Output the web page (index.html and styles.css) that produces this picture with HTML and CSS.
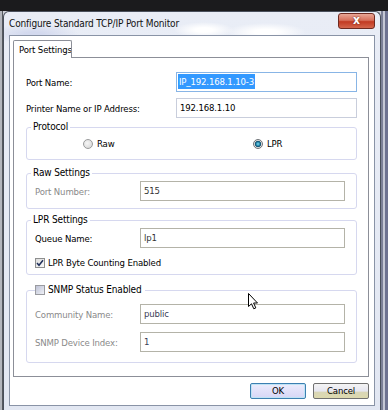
FILE: index.html
```html
<!DOCTYPE html>
<html lang="en">
<head>
    <meta charset="UTF-8" />
    <meta name="viewport" content="width=device-width, initial-scale=1.0" />
    <title>Configure Standard TCP/IP Port Monitor</title>
    <link rel="stylesheet" href="styles.css">
</head>
<body>
    <div class="taskbar"></div>
    <div class="desktop">
        <div class="behind-left"></div>
        <div class="window">
            <div class="title-bar">
                <span class="title">Configure Standard TCP/IP Port Monitor</span>
                <div class="close-button">x</div>
            </div>
            <div class="client">
                <div class="tabs">
                    <div class="tab">Port Settings</div>
                </div>
                <div class="tab-page">
                    <div class="field-row">
                        <span class="label">Port Name:</span>
                        <div class="textbox focused"><span class="selected">IP_192.168.1.10-3</span></div>
                    </div>
                    <div class="field-row second">
                        <span class="label">Printer Name or IP Address:</span>
                        <div class="textbox light">192.168.1.10</div>
                    </div>

                    <fieldset class="group protocol">
                        <legend>Protocol</legend>
                        <div class="radio-row">
                            <div class="radio-item first">
                                <span class="radio"></span>
                                <span>Raw</span>
                            </div>
                            <div class="radio-item">
                                <span class="radio checked"></span>
                                <span>LPR</span>
                            </div>
                        </div>
                    </fieldset>

                    <fieldset class="group raw">
                        <legend>Raw Settings</legend>
                        <div class="field-row">
                            <span class="label small disabled">Port Number:</span>
                            <div class="textbox grey">515</div>
                        </div>
                    </fieldset>

                    <fieldset class="group lpr">
                        <legend>LPR Settings</legend>
                        <div class="field-row">
                            <span class="label small">Queue Name:</span>
                            <div class="textbox grey">lp1</div>
                        </div>
                        <div class="check-row">
                            <span class="checkbox">
                                <svg width="8" height="8" viewBox="0 0 8 8"><path d="M1 4 L3 6.3 L7 1.2" fill="none" stroke="#1f2f5a" stroke-width="1.5"/></svg>
                            </span>
                            <span>LPR Byte Counting Enabled</span>
                        </div>
                    </fieldset>

                    <fieldset class="group snmp">
                        <legend class="check-legend">
                            <span class="checkbox empty"></span>
                            <span>SNMP Status Enabled</span>
                        </legend>
                        <div class="field-row">
                            <span class="label small disabled">Community Name:</span>
                            <div class="textbox grey value-dim">public</div>
                        </div>
                        <div class="field-row gap">
                            <span class="label small disabled">SNMP Device Index:</span>
                            <div class="textbox grey value-dim">1</div>
                        </div>
                    </fieldset>
                </div>
                <div class="buttons">
                    <div class="button ok">OK</div>
                    <div class="button cancel">Cancel</div>
                </div>
            </div>
        </div>
        <div class="behind-right"></div>
    </div>

    <!-- mouse pointer -->
    <svg class="pointer" width="11" height="17" viewBox="0 0 11 17">
        <path d="M0.5 0.5 L0.5 13.5 L3.5 10.8 L5.8 15.8 L7.8 14.9 L5.6 10 L9.5 10 Z" fill="#fff" stroke="#000" stroke-width="1"/>
    </svg>
</body>
</html>
```

FILE: styles.css
```css
* {
    box-sizing: border-box;
}

body {
    margin: 0;
    width: 388px;
    height: 410px;
    overflow: hidden;
    position: relative;
    font-family: "DejaVu Sans Condensed", "DejaVu Sans", sans-serif;
    font-stretch: condensed;
    font-size: 9.5px;
    letter-spacing: -0.15px;
    color: #000;
    background: #cdd0d8;
}

.taskbar {
    height: 11px;
    background: #1b1b1d;
}

.desktop {
    display: flex;
    height: 399px;
}

.behind-left {
    width: 3px;
    background: #b3b6bd;
    border-right: 1px solid #55595f;
}

.behind-right {
    flex: 1;
    background: linear-gradient(90deg, #7b8097 0 2px, #c4c7d4 2px 4px, #6d7290 4px);
}

.window {
    width: 378px;
    display: flex;
    flex-direction: column;
    border: 1px solid #4a505c;
    border-bottom: none;
    border-radius: 6px 6px 0 0;
    background:
        radial-gradient(ellipse 40px 9px at 262px 20px, #ffffff 30%, rgba(255,255,255,0) 100%),
        radial-gradient(ellipse 30px 8px at 200px 18px, #ffffff 30%, rgba(255,255,255,0) 100%),
        radial-gradient(ellipse 45px 10px at 30px 22px, #d3d9ee 20%, rgba(211,217,238,0) 100%),
        linear-gradient(#e9edf6, #e2e7f2);
}

.title-bar {
    height: 23px;
    display: flex;
    align-items: flex-start;
}

.title {
    padding-left: 5px;
    line-height: 23px;
    font-size: 10px;
    color: #111;
}

.close-button {
    margin-left: auto;
    margin-right: 5px;
    margin-top: 1px;
    width: 37px;
    height: 16px;
    border: 1px solid #6e2a20;
    border-radius: 3px;
    background: linear-gradient(#e9a695 0%, #d7705c 45%, #c23a22 55%, #d4664c 100%);
    color: #fff;
    font-family: "DejaVu Sans", sans-serif;
    font-weight: bold;
    font-size: 12px;
    line-height: 12px;
    text-align: center;
    text-shadow: 0 0 2px #5a1a10;
}

.client {
    margin: 0 5px 0 5px;
    height: 371px;
    border: 1px solid #8993a6;
    background: #fff;
    padding: 4px 5px 0 3px;
}

.tabs {
    display: flex;
    height: 18px;
}

.tab {
    position: relative;
    z-index: 1;
    width: 59px;
    height: 18px;
    border: 1px solid #8c8f98;
    border-bottom: none;
    border-radius: 2px 2px 0 0;
    background: #fff;
    padding-left: 5px;
    line-height: 17px;
    white-space: nowrap;
    overflow: hidden;
}

.tab-page {
    margin-top: -1px;
    height: 320px;
    border: 1px solid #8c8f98;
    padding: 14px 11px 0 12px;
}

.field-row {
    display: flex;
    align-items: center;
    height: 20px;
}

.field-row.second {
    margin-top: 6px;
}

.field-row.gap {
    margin-top: 8px;
}

.label {
    width: 150px;
    flex: none;
}

.label.small {
    width: 105px;
}

.disabled {
    color: #8a8a8a;
}

.textbox {
    flex: 1;
    height: 20px;
    border: 1px solid #b4b3a8;
    padding: 0 3px;
    line-height: 18px;
    background: #fff;
    white-space: nowrap;
}

.textbox.focused {
    border-color: #88b5e6;
    padding-left: 1px;
}

.textbox.light {
    border-color: #c9cedc;
}

.textbox.grey {
    color: #333;
}

.textbox.value-dim {
    color: #3a3d55;
}

.selected {
    display: inline-block;
    background: #3399ff;
    color: #fff;
    line-height: 15px;
    padding: 0 1px;
    margin-top: 1px;
}

.group {
    margin: 0;
    border: 1px solid #d6d8ef;
    border-radius: 3px;
    padding: 2px 11px 7px 8px;
}

.group legend {
    margin-left: -4px;
    padding: 0 2px;
    line-height: 12px;
    font-size: 10px;
}

.group.protocol {
    margin-top: 3px;
    padding-top: 4px;
    padding-bottom: 9px;
}

.group.raw {
    margin-top: 7px;
}

.group.lpr {
    margin-top: 5px;
    padding-bottom: 6px;
}

.group.snmp {
    margin-top: 9px;
    padding-top: 8px;
    padding-bottom: 10px;
}

.group legend.check-legend {
    display: flex;
    align-items: center;
    gap: 3px;
    margin-left: 0;
    padding: 0 3px 0 0;
}

.radio-row {
    display: flex;
    height: 13px;
    align-items: center;
    padding-left: 48px;
}

.radio-item {
    display: flex;
    align-items: center;
    gap: 4px;
}

.radio-item.first {
    width: 170px;
}

.radio {
    width: 10px;
    height: 10px;
    border-radius: 50%;
    border: 1px solid #9a9b9c;
    background: radial-gradient(circle at 40% 40%, #f6f6f6 0, #d2d2d2 100%);
}

.radio.checked {
    border-color: #6f7378;
    background: radial-gradient(circle, #7fe0f5 0, #1f7ea3 2px, #104c6a 2.8px, #d8d8d8 3.4px, #f4f4f4 100%);
}

.check-row {
    display: flex;
    align-items: center;
    gap: 3px;
    height: 11px;
    margin-top: 9px;
}

.checkbox {
    width: 10px;
    height: 10px;
    flex: none;
    border: 1px solid #8e8f8f;
    background: linear-gradient(135deg, #dcdcdc, #fafafa);
    display: flex;
    align-items: center;
    justify-content: center;
}

.checkbox.empty {
    background: linear-gradient(135deg, #bfc3d6, #eef0f6);
    border-color: #9a9ba0;
}

.buttons {
    display: flex;
    justify-content: flex-end;
    gap: 7px;
    margin-top: 6px;
}

.button {
    width: 56px;
    height: 16px;
    border: 1px solid #707070;
    border-radius: 2px;
    text-align: center;
    line-height: 14px;
}

.button.ok {
    border-color: #3c7fb1;
    background: linear-gradient(#ececfc, #d6d6f6);
    box-shadow: inset 0 0 0 1px #bfe3f5;
}

.button.cancel {
    background: linear-gradient(#f4f4f4 0%, #e6e6f0 50%, #d9d6b6 60%, #ddd9ae 100%);
}

.pointer {
    position: absolute;
    left: 248px;
    top: 293px;
}
```
